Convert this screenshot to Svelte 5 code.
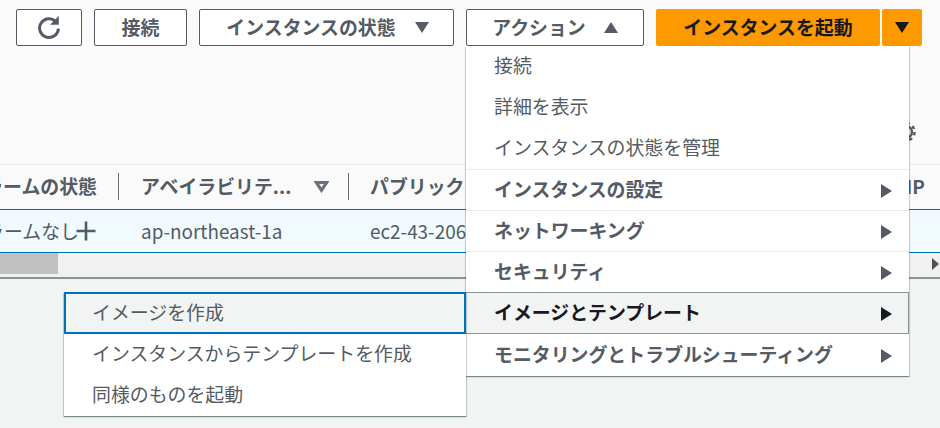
<script lang="ts">
	const mainItems = [
		{ label: '接続' },
		{ label: '詳細を表示' },
		{ label: 'インスタンスの状態を管理' },
		{ label: 'インスタンスの設定', sub: true },
		{ label: 'ネットワーキング', sub: true },
		{ label: 'セキュリティ', sub: true },
		{ label: 'イメージとテンプレート', sub: true, open: true },
		{ label: 'モニタリングとトラブルシューティング', sub: true }
	];

	const subItems = ['イメージを作成', 'インスタンスからテンプレートを作成', '同様のものを起動'];
</script>

<div class="page">
	<div class="panel">
		<div class="toolbar">
			<button class="btn refresh" aria-label="更新">
				<svg width="26" height="26" viewBox="0 0 26 26" fill="none">
					<path d="M19.6 7.4A9.4 9.4 0 1 0 22.4 14.6" stroke="#545b64" stroke-width="3" />
					<path d="M22.8 2V10.8H14Z" fill="#545b64" />
				</svg>
			</button>
			<button class="btn connect">接続</button>
			<button class="btn state">インスタンスの状態<span class="caret down"></span></button>
			<button class="btn action">アクション<span class="caret up"></span></button>
			<div class="launch">
				<button class="primary main">インスタンスを起動</button>
				<button class="primary more" aria-label="その他"><span class="caret down dark"></span></button>
			</div>
		</div>
		<div class="settings">
			<svg width="24" height="24" viewBox="0 0 24 24" fill="none">
				<circle cx="12" cy="12" r="6" stroke="#545b64" stroke-width="2.4" />
				<circle cx="12" cy="12" r="8.6" stroke="#545b64" stroke-width="2.4" stroke-dasharray="3.4 3.35" />
			</svg>
		</div>
	</div>

	<div class="thead">
		<div class="th alarm"><span>アラームの状態</span></div>
		<div class="th zone">
			<span>アベイラビリテ...</span>
			<svg width="15" height="12" viewBox="0 0 15 12" fill="none">
				<path d="M2.4 1.6H12.6L7.5 9.4Z" stroke="#687078" stroke-width="3" />
			</svg>
		</div>
		<div class="th dns"><span>パブリック IPv4 DNS</span></div>
		<div class="th ip"><span>IP</span></div>
	</div>

	<div class="row">
		<div class="td alarm">
			<span>アラームなし</span>
			<svg class="plus" width="20" height="20" viewBox="0 0 20 20">
				<path d="M0.5 10H19.5M10 0.5V19.5" stroke="#545b64" stroke-width="2.6" />
			</svg>
		</div>
		<div class="td zone">ap-northeast-1a</div>
		<div class="td dns">ec2-43-206-100-12</div>
	</div>

	<div class="scrollbar">
		<div class="thumb"></div>
		<span class="scroll-right"></span>
	</div>

	<div class="footer"></div>

	<ul class="menu main-menu">
		{#each mainItems as item}
			<li class:sub={item.sub} class:open={item.open}>
				<span class="label">{item.label}</span>
				{#if item.sub}<span class="arrow"></span>{/if}
			</li>
		{/each}
	</ul>

	<ul class="menu sub-menu">
		{#each subItems as label, i}
			<li class:focused={i === 0}><span class="label">{label}</span></li>
		{/each}
	</ul>
</div>

<style>
	:global(body) {
		margin: 0;
		background: #f2f3f3;
	}

	.page {
		position: relative;
		width: 940px;
		height: 428px;
		overflow: hidden;
		display: flex;
		flex-direction: column;
		font-family: 'Noto Sans CJK JP', sans-serif;
		font-size: 18.9px;
		color: #16191f;
	}

	button {
		font: inherit;
		margin: 0;
		cursor: pointer;
	}

	.panel {
		height: 164px;
		background: #fafafa;
		border-bottom: 1px solid #eaeded;
		display: flex;
		flex-direction: column;
		justify-content: space-between;
	}

	.toolbar {
		display: flex;
		gap: 12px;
		padding: 9px 0 0 16px;
	}

	.btn {
		height: 37px;
		padding: 0 0 3px;
		box-sizing: border-box;
		background: #fff;
		border: 1px solid #545b64;
		border-radius: 2px;
		color: #545b64;
		font-weight: 700;
		display: flex;
		align-items: center;
		justify-content: center;
		white-space: nowrap;
	}

	.refresh {
		width: 66px;
		padding: 0 0 2px;
	}

	.connect {
		width: 93px;
	}

	.state {
		width: 255px;
		padding-left: 2px;
	}

	.state .caret {
		margin-left: 19px;
	}

	.action {
		width: 178px;
	}

	.caret {
		display: inline-block;
		width: 0;
		height: 0;
		margin: 3px 0 0 18px;
		border-left: 7px solid transparent;
		border-right: 7px solid transparent;
	}

	.caret.down {
		border-top: 11px solid #545b64;
	}

	.caret.up {
		border-bottom: 11px solid #545b64;
	}

	.caret.dark {
		margin: 3px 0 0;
		border-top-color: #16191f;
	}

	.launch {
		display: flex;
		gap: 2px;
	}

	.primary {
		height: 37px;
		padding: 0 0 3px;
		border: 0;
		border-radius: 2px;
		background: #ff9900;
		color: #16191f;
		font-weight: 700;
		display: flex;
		align-items: center;
		justify-content: center;
		white-space: nowrap;
	}

	.primary.main {
		width: 224px;
	}

	.primary.more {
		width: 40px;
	}

	.settings {
		display: flex;
		justify-content: flex-end;
		padding: 0 22px 20px 0;
	}

	.thead {
		height: 44px;
		display: flex;
		background: #fafafa;
		color: #545b64;
		font-weight: 700;
		flex-shrink: 0;
	}

	.th {
		display: flex;
		align-items: center;
		overflow: hidden;
		white-space: nowrap;
		padding-bottom: 3px;
		box-sizing: border-box;
	}

	.th.alarm {
		width: 119px;
		height: 27px;
		margin-top: 8px;
		padding-right: 21px;
		justify-content: flex-end;
		border-right: 1px solid #687078;
	}

	.th.zone {
		width: 230px;
		height: 27px;
		margin-top: 8px;
		padding-left: 22px;
		padding-right: 19px;
		justify-content: space-between;
		border-right: 1px solid #687078;
	}

	.th.zone svg {
		margin-top: 3px;
	}

	.th.dns {
		width: 557px;
		padding-left: 21px;
	}

	.th.ip {
		flex: 1;
	}

	.row {
		height: 44px;
		box-sizing: border-box;
		display: flex;
		align-items: center;
		flex-shrink: 0;
		background: #f1faff;
		border-top: 1px solid #0073bb;
		border-bottom: 1px solid #0073bb;
		color: #545b64;
		white-space: nowrap;
	}

	.td {
		display: flex;
		align-items: center;
		overflow: hidden;
		padding-bottom: 2px;
		box-sizing: border-box;
	}

	.td.alarm {
		width: 119px;
		padding-right: 21px;
		justify-content: flex-end;
		padding-bottom: 0;
	}

	.td.alarm span {
		padding-bottom: 2px;
	}

	.plus {
		flex-shrink: 0;
		margin-left: -3px;
		margin-right: 2px;
	}

	.td.zone {
		width: 229px;
		padding-left: 22px;
	}

	.td.dns {
		width: 400px;
		padding-left: 22px;
	}

	.scrollbar {
		height: 26px;
		box-sizing: border-box;
		background: #f1f1f1;
		border-bottom: 2px solid #879596;
		flex-shrink: 0;
		display: flex;
		align-items: stretch;
		justify-content: space-between;
	}

	.thumb {
		width: 58px;
		height: 21px;
		background: #c1c1c1;
	}

	.scroll-right {
		align-self: center;
		margin-right: 1px;
		margin-top: -2px;
		border-left: 7px solid #505050;
		border-top: 6px solid transparent;
		border-bottom: 6px solid transparent;
	}

	.footer {
		flex: 1;
		background: #f2f3f3;
	}

	.menu {
		position: absolute;
		margin: 0;
		padding: 0;
		list-style: none;
		background: #fff;
		box-shadow: 0 1px 1px 0 rgba(0, 28, 36, 0.3), 1px 1px 1px 0 rgba(0, 28, 36, 0.15),
			-1px 1px 1px 0 rgba(0, 28, 36, 0.15);
		color: #545b64;
	}

	.label {
		margin-top: -4px;
	}

	.main-menu {
		left: 466px;
		top: 46px;
		width: 443px;
	}

	.main-menu li {
		height: 41px;
		box-sizing: border-box;
		padding: 0 17px 0 28px;
		display: flex;
		align-items: center;
		justify-content: space-between;
	}

	.main-menu li.sub {
		font-weight: 700;
		border-top: 1px solid #eaeded;
	}

	.main-menu li.open {
		height: 42px;
		padding-right: 16px;
		background: #f2f3f3;
		color: #16191f;
		border-top: 1px solid #879596;
		border-bottom: 1px solid #879596;
		border-right: 1px solid #879596;
	}

	.main-menu li.open + li {
		border-top: 0;
		height: 42px;
	}

	.arrow {
		margin-top: 1px;
		border-left: 11px solid currentColor;
		border-top: 7px solid transparent;
		border-bottom: 7px solid transparent;
	}

	.sub-menu {
		left: 64px;
		top: 292px;
		width: 402px;
	}

	.sub-menu li {
		height: 41px;
		box-sizing: border-box;
		padding: 0 28px;
		display: flex;
		align-items: center;
		white-space: nowrap;
	}

	.sub-menu li.focused {
		height: 42px;
		background: #f2f3f3;
		border: 2px solid #0073bb;
		padding: 0 26px;
	}
</style>
